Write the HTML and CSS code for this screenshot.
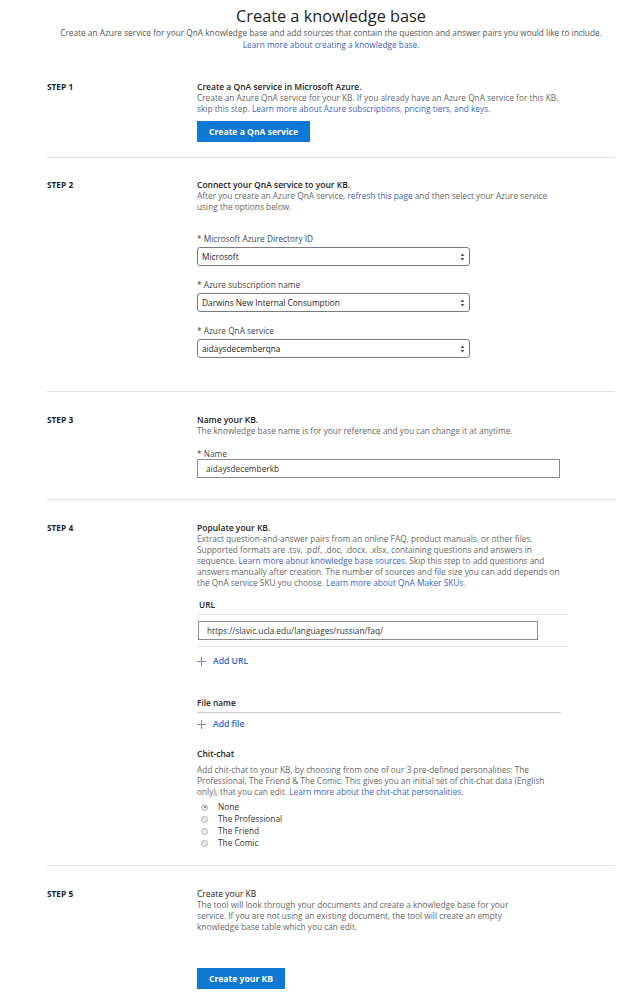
FILE: index.html
```html
<!DOCTYPE html>
<html lang="en">
<head>
<meta charset="utf-8">
<title>Create a knowledge base</title>
<link rel="stylesheet" href="styles.css">
</head>
<body>
<main class="page">
  <header class="head">
    <h1 class="title">Create a knowledge base</h1>
    <p class="subtitle">Create an Azure service for your QnA knowledge base and add sources that contain the question and answer pairs you would like to include.<br><a class="link" href="#">Learn more about creating a knowledge base.</a></p>
  </header>

  <section class="step step-1">
    <div class="step-label">STEP 1</div>
    <div class="step-body">
      <h2 class="step-title">Create a QnA service in Microsoft Azure.</h2>
      <p class="desc">Create an Azure QnA service for your KB. If you already have an Azure QnA service for this KB, skip this step. <a class="link" href="#">Learn more about Azure subscriptions, pricing tiers, and keys.</a></p>
      <button class="btn btn-service">Create a QnA service</button>
    </div>
  </section>

  <section class="step step-2">
    <div class="step-label">STEP 2</div>
    <div class="step-body">
      <h2 class="step-title">Connect your QnA service to your KB.</h2>
      <p class="desc">After you create an Azure QnA service, <a class="link" href="#">refresh this page</a> and then select your Azure service using the options below.</p>
      <div class="fields">
        <div class="field">
          <div class="field-label">* Microsoft Azure Directory ID</div>
          <div class="select"><span>Microsoft</span><svg class="arrows" width="5" height="8" viewBox="0 0 5 8"><path d="M2.5 0.5 L4.5 3 L0.5 3 Z M2.5 7.5 L4.5 5 L0.5 5 Z" fill="#555"/></svg></div>
        </div>
        <div class="field">
          <div class="field-label">* Azure subscription name</div>
          <div class="select"><span>Darwins New Internal Consumption</span><svg class="arrows" width="5" height="8" viewBox="0 0 5 8"><path d="M2.5 0.5 L4.5 3 L0.5 3 Z M2.5 7.5 L4.5 5 L0.5 5 Z" fill="#555"/></svg></div>
        </div>
        <div class="field">
          <div class="field-label">* Azure QnA service</div>
          <div class="select"><span>aidaysdecemberqna</span><svg class="arrows" width="5" height="8" viewBox="0 0 5 8"><path d="M2.5 0.5 L4.5 3 L0.5 3 Z M2.5 7.5 L4.5 5 L0.5 5 Z" fill="#555"/></svg></div>
        </div>
      </div>
    </div>
  </section>

  <section class="step step-3">
    <div class="step-label">STEP 3</div>
    <div class="step-body">
      <h2 class="step-title">Name your KB.</h2>
      <p class="desc">The knowledge base name is for your reference and you can change it at anytime.</p>
      <div class="name-label">* Name</div>
      <div class="textbox name-box">aidaysdecemberkb</div>
    </div>
  </section>

  <section class="step step-4">
    <div class="step-label">STEP 4</div>
    <div class="step-body">
      <h2 class="step-title">Populate your KB.</h2>
      <p class="desc">Extract question-and-answer pairs from an online FAQ, product manuals, or other files. Supported formats are .tsv, .pdf, .doc, .docx, .xlsx, containing questions and answers in sequence. <a class="link" href="#">Learn more about knowledge base sources.</a> Skip this step to add questions and answers manually after creation. The number of sources and file size you can add depends on the QnA service SKU you choose. <a class="link" href="#">Learn more about QnA Maker SKUs.</a></p>

      <div class="url-head">URL</div>
      <div class="url-row">
        <div class="textbox url-box">https://slavic.ucla.edu/languages/russian/faq/</div>
      </div>
      <a class="add" href="#"><svg class="plus" width="9" height="9" viewBox="0 0 9 9"><path d="M4.5 0 V9 M0 4.5 H9" stroke="#8a7fd0" stroke-width="1"/></svg><span>Add URL</span></a>

      <div class="file-head">File name</div>
      <a class="add add-file" href="#"><svg class="plus" width="9" height="9" viewBox="0 0 9 9"><path d="M4.5 0 V9 M0 4.5 H9" stroke="#8a7fd0" stroke-width="1"/></svg><span>Add file</span></a>

      <h3 class="chit-head">Chit-chat</h3>
      <p class="desc chit-desc">Add chit-chat to your KB, by choosing from one of our 3 pre-defined personalities: The Professional, The Friend &amp; The Comic. This gives you an initial set of chit-chat data (English only), that you can edit. <a class="link" href="#">Learn more about the chit-chat personalities.</a></p>
      <ul class="radios">
        <li class="radio checked"><span class="dot"></span>None</li>
        <li class="radio"><span class="dot"></span>The Professional</li>
        <li class="radio"><span class="dot"></span>The Friend</li>
        <li class="radio"><span class="dot"></span>The Comic</li>
      </ul>
    </div>
  </section>

  <section class="step step-5">
    <div class="step-label">STEP 5</div>
    <div class="step-body">
      <h2 class="step-title step5-title">Create your KB</h2>
      <p class="desc step5-desc">The tool will look through your documents and create a knowledge base for your service. If you are not using an existing document, the tool will create an empty knowledge base table which you can edit.</p>
      <button class="btn btn-create">Create your KB</button>
    </div>
  </section>
</main>
</body>
</html>
```

FILE: styles.css
```css
* { box-sizing: border-box; }

body {
  margin: 0;
  background: #fff;
  font-family: "Open Sans", "Noto Sans", "Liberation Sans", sans-serif;
  font-size: 8.3px;
  line-height: 11px;
  color: #666;
}

.page {
  width: 635px;
  padding: 0 20px 0 47px;
}

.head {
  text-align: center;
  padding-top: 5px;
}

.title {
  margin: 0;
  font-size: 16.3px;
  font-weight: 400;
  line-height: 22px;
  color: #222;
}

.subtitle {
  margin: 0;
  line-height: 12px;
  color: #555;
}

.link {
  color: #3a62c4;
  text-decoration: none;
}

.step {
  display: flex;
  border-bottom: 1px solid #e1e1e1;
}

.step-5 { border-bottom: none; }

.step-label {
  flex: 0 0 150px;
  font-weight: 700;
  color: #222;
}

.step-body {
  flex: 0 0 372px;
  display: flex;
  flex-direction: column;
  align-items: flex-start;
}

.step-title {
  margin: 0;
  font-size: 8.5px;
  font-weight: 600;
  line-height: 11px;
  color: #222;
}

.desc {
  margin: 0;
  color: #666;
}

.btn {
  border: none;
  background: #0f78d4;
  color: #fff;
  font-family: inherit;
  font-size: 8.6px;
  font-weight: 700;
  height: 21px;
  padding: 0;
  cursor: pointer;
}

.step-1 { padding: 30px 0 15px; }
.btn-service { width: 113px; margin-top: 7px; }

.step-2 { padding: 21px 0 33px; }
.fields { display: flex; flex-direction: column; gap: 13px; margin-top: 21px; }
.field { display: flex; flex-direction: column; gap: 3px; }
.field-label { color: #444; }
.select {
  width: 273px;
  height: 19px;
  border: 1px solid #7a7a7a;
  border-radius: 3px;
  display: flex;
  align-items: center;
  justify-content: space-between;
  padding: 0 4px 0 4px;
  color: #222;
}
.arrows { display: block; }

.step-3 { padding: 22px 0 21px; }
.name-label { color: #444; margin-top: 13px; line-height: 10px; }
.textbox {
  height: 19px;
  border: 1px solid #8c8c8c;
  color: #333;
  display: flex;
  align-items: center;
  padding-left: 8px;
}
.name-box { width: 363px; }

.step-4 { padding: 22px 0 16px; }
.url-head {
  width: 371px;
  margin-top: 11px;
  padding: 0 0 4px 2px;
  font-weight: 600;
  color: #222;
  border-bottom: 1px solid #e1e1e1;
}
.url-row {
  width: 371px;
  padding: 6px 0 6px 1px;
  border-bottom: 1px solid #e1e1e1;
}
.url-box { width: 340px; }

.add {
  display: flex;
  align-items: center;
  gap: 7px;
  margin-top: 9px;
  color: #2f63c6;
  font-weight: 600;
  font-size: 8.6px;
  text-decoration: none;
}
.plus { display: block; }

.file-head {
  width: 364px;
  margin-top: 30px;
  padding-bottom: 4px;
  font-weight: 600;
  color: #222;
  border-bottom: 1px solid #cfcfcf;
}
.add-file { margin-top: 6px; }

.chit-head {
  margin: 18px 0 0;
  font-size: 8.5px;
  font-weight: 600;
  line-height: 11px;
  color: #222;
}
.chit-desc { margin-top: 5px; width: 364px; }

.radios {
  list-style: none;
  margin: 4px 0 0;
  padding: 0 0 0 4px;
}
.radio {
  display: flex;
  align-items: center;
  gap: 10px;
  line-height: 12px;
  color: #333;
}
.dot {
  width: 7px;
  height: 7px;
  border-radius: 50%;
  border: 1px solid #b5b5b5;
  background: #e9e9e9;
  position: relative;
}
.radio.checked .dot::after {
  content: "";
  position: absolute;
  left: 1.5px;
  top: 1.5px;
  width: 2px;
  height: 2px;
  border-radius: 50%;
  background: #666;
}

.step-5 { padding: 22px 0 0; }
.step5-title { font-weight: 400; }
.step5-desc { width: 330px; }
.btn-create { width: 88px; margin-top: 36px; }
```
